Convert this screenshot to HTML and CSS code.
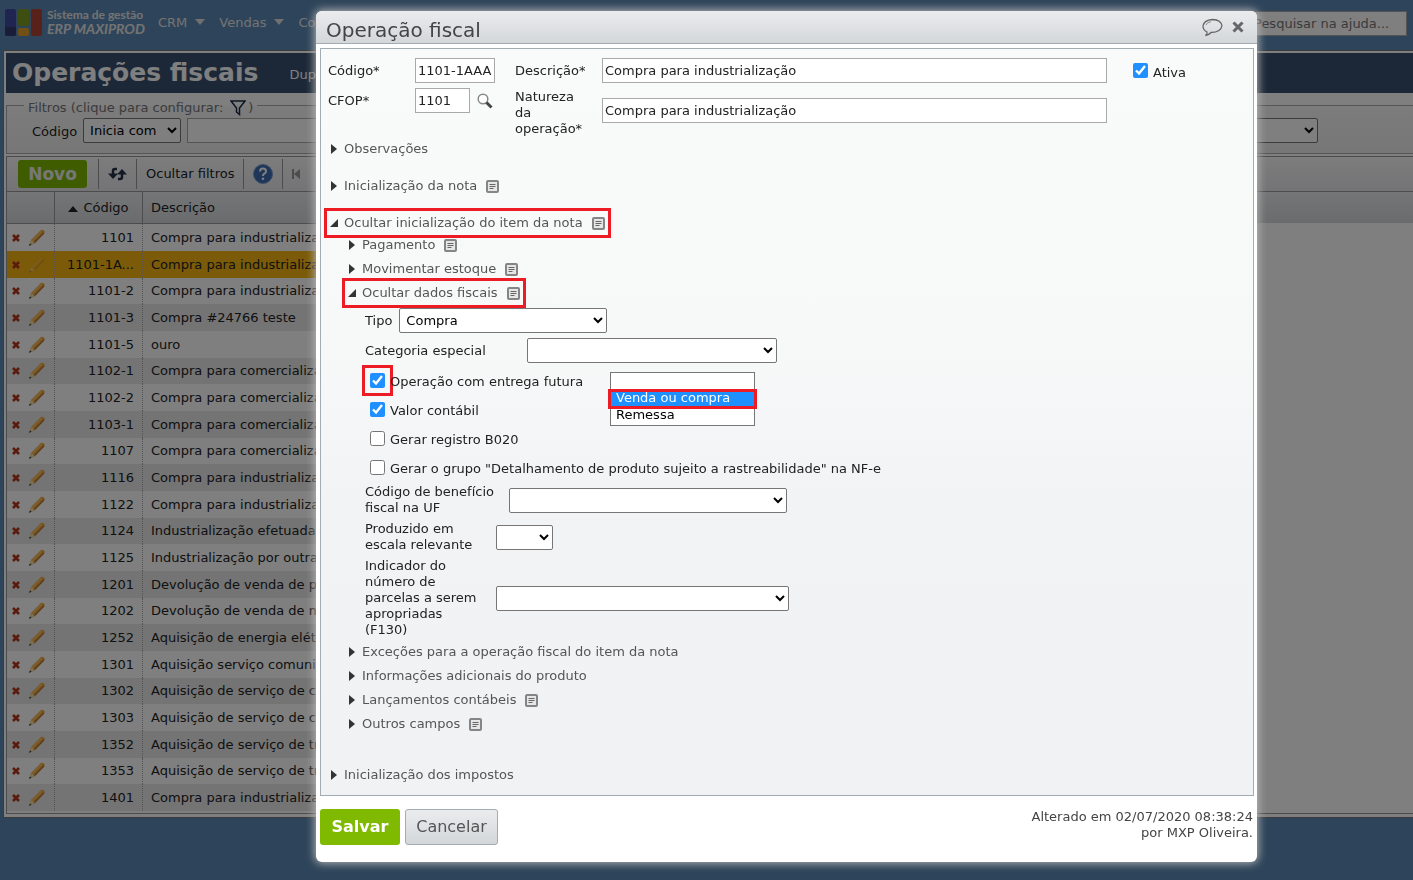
FILE: index.html
```html
<!DOCTYPE html>
<html lang="pt-BR">
<head>
  <meta charset="UTF-8">
  <title>Operações fiscais</title>
  <link rel="stylesheet" href="styles.css">
</head>
<body>
  <svg class="simbolos" aria-hidden="true">
    <symbol id="nota" viewBox="0 0 13 13">
      <rect x="1" y="1" width="11" height="11" rx="1" fill="#e6e6e6" stroke="#858585" stroke-width="2"/>
      <path d="M3.500 4.500h6M3.500 6.500h6M3.500 8.500h4" stroke="#666"/>
    </symbol>
    <symbol id="excluir" viewBox="0 0 10 10">
      <path d="M2 2l6 6M8 2l-6 6" stroke="#b5351c" stroke-width="2.600"/>
    </symbol>
    <symbol id="lapis" viewBox="0 0 18 18">
      <path d="M1 17l2-6L13 1q2-1 4 2L7 14z" fill="#e8a33c"/>
      <path d="M4 12L14 2" stroke="#ffc468" stroke-width="1.500"/>
      <path d="M6 14L16 4" stroke="#b87428" stroke-width="1.200"/>
      <path d="M1 17l2-6 4 3z" fill="#f5dcae"/>
      <path d="M1 17l1-2.500 1.500 1z" fill="#333"/>
    </symbol>
  </svg>

  <header class="topo">
    <svg class="logo" viewBox="0 0 38 28" width="38" height="28">
      <rect x="0" y="0" width="11" height="27" rx="2" fill="#3f48a0"/>
      <rect x="0" y="18" width="11" height="9" rx="2" fill="#343a70"/>
      <rect x="13" y="0" width="11" height="17" rx="2" fill="#7d9c20"/>
      <rect x="13" y="19" width="11" height="8" rx="2" fill="#e3a02c"/>
      <rect x="26" y="0" width="11" height="27" rx="2" fill="#b04436"/>
    </svg>
    <div class="marca">
      <span class="marca-linha">Sistema de gestão</span>
      <span class="marca-nome">ERP MAXIPROD</span>
    </div>
    <nav class="menu">
      <a href="#">CRM<span class="seta"></span></a>
      <a href="#">Vendas<span class="seta"></span></a>
      <a href="#">Compras<span class="seta"></span></a>
    </nav>
    <input class="busca" type="text" placeholder="Pesquisar na ajuda..." aria-label="Pesquisar na ajuda">
  </header>

  <main class="pagina">
    <div class="titulo">
      <h1>Operações fiscais</h1>
      <a href="#">Duplicar</a>
    </div>

    <fieldset class="filtros">
      <legend>Filtros (clique para configurar:
        <svg viewBox="0 0 16 16" width="16" height="16"><path d="M1 1h14L9.500 8v6.500L6.500 12V8z" fill="none" stroke="#1b2c48" stroke-width="1.500"/></svg>)</legend>
      <div class="filtros-linha">
        <label for="f-codigo">Código</label>
        <select id="f-codigo" class="operador"><option>Inicia com</option></select>
        <input type="text" aria-label="Valor do código">
        <select class="filtro-extra" aria-label="Outro filtro"><option></option></select>
      </div>
    </fieldset>

    <div class="grade">
      <div class="ferramentas">
        <button class="novo" type="button">Novo</button>
        <button class="ferramenta" type="button" aria-label="Atualizar">
          <svg viewBox="0 0 19 14" width="19" height="14"><path d="M9 2H7q-2 0-2 2v5M10 12h2q2 0 2-2V5" fill="none" stroke="#22324a" stroke-width="2.500"/><path d="M0 6.500h10L5 12zM9 7.500h10L14 2z" fill="#22324a"/></svg>
        </button>
        <button class="ferramenta" type="button">Ocultar filtros</button>
        <button class="ferramenta" type="button" aria-label="Ajuda">
          <svg viewBox="0 0 20 20" width="20" height="20"><circle cx="10" cy="10" r="9.500" fill="#3a6cb4" stroke="#7f9ccc"/><path d="M7 7.500q0-3 3-3t3 2.700q0 1.600-1.700 2.500-1.300.800-1.300 2.300" fill="none" stroke="#fff" stroke-width="2"/><circle cx="10" cy="14.800" r="1.300" fill="#fff"/></svg>
        </button>
        <button class="ferramenta" type="button" aria-label="Primeira página">
          <svg viewBox="0 0 8 12" width="8" height="12"><path d="M1 1v10" stroke="#999" stroke-width="2"/><path d="M8 1v10L2 6z" fill="#999"/></svg>
        </button>
      </div>
      <div class="cabecalho-fundo">
        <table class="lista">
          <thead>
            <tr><th class="c-acoes"></th><th class="c-codigo"><span class="ordem"></span>Código</th><th class="c-desc">Descrição</th></tr>
          </thead>
          <tbody id="linhas"></tbody>
        </table>
      </div>
    </div>
  </main>

  <div class="sombra"></div>

  <section class="janela" role="dialog" aria-labelledby="janela-titulo">
    <header class="janela-topo">
      <h2 id="janela-titulo">Operação fiscal</h2>
      <button type="button" aria-label="Comentar">
        <svg viewBox="0 0 21 19" width="21" height="19"><path d="M5 14Q1 12 1 8q1-6 9.500-6.500Q19 2 20 7.500q-1 7-11 7Q7 17 3.500 17.500 5.500 16 5 14z" fill="none" stroke="#666" stroke-width="1.300"/><path d="M4 7q1-3 5-3.300" fill="none" stroke="#888"/></svg>
      </button>
      <button type="button" aria-label="Fechar">
        <svg viewBox="0 0 12 12" width="12" height="12"><path d="M1.500 1.500l9 9M10.500 1.500l-9 9" stroke="#666" stroke-width="3"/></svg>
      </button>
    </header>

    <form class="conteudo">
      <div class="dados">
        <label for="codigo">Código*</label>
        <div><input id="codigo" class="i-codigo" type="text" value="1101-1AAA"></div>
        <label for="descricao">Descrição*</label>
        <input id="descricao" type="text" value="Compra para industrialização">
        <div class="ativa"><input id="ativa" type="checkbox" checked><label for="ativa">Ativa</label></div>

        <label for="cfop">CFOP*</label>
        <div class="cfop">
          <input id="cfop" class="i-cfop" type="text" value="1101">
          <button type="button" aria-label="Procurar CFOP">
            <svg viewBox="0 0 16 16" width="16" height="16"><circle cx="6" cy="6" r="4.800" fill="#fff" stroke="#888" stroke-width="1.500"/><path d="M9.500 9.500l5 5" stroke="#444" stroke-width="3"/></svg>
          </button>
        </div>
        <label class="natureza" for="natureza">Natureza da operação*</label>
        <input id="natureza" class="i-natureza" type="text" value="Compra para industrialização">
      </div>

      <div class="secoes">
        <a class="secao" href="#"><i class="fechado"></i>Observações</a>
        <a class="secao" href="#"><i class="fechado"></i>Inicialização da nota<svg class="nota"><use href="#nota"/></svg></a>
        <a class="secao marcado" href="#"><i class="aberto"></i>Ocultar inicialização do item da nota<svg class="nota"><use href="#nota"/></svg></a>
      </div>

      <div class="subsecoes">
        <a class="secao" href="#"><i class="fechado"></i>Pagamento<svg class="nota"><use href="#nota"/></svg></a>
        <a class="secao" href="#"><i class="fechado"></i>Movimentar estoque<svg class="nota"><use href="#nota"/></svg></a>
        <a class="secao marcado" href="#"><i class="aberto"></i>Ocultar dados fiscais<svg class="nota"><use href="#nota"/></svg></a>

        <div class="campos">
          <div class="campo">
            <label for="tipo">Tipo</label>
            <select id="tipo" class="s-tipo"><option>Compra</option></select>
          </div>
          <div class="campo">
            <label for="categoria" class="l-categoria">Categoria especial</label>
            <select id="categoria" class="s-categoria"><option></option></select>
          </div>
          <div class="campo check">
            <span class="caixa"><input id="futura" type="checkbox" checked></span>
            <label for="futura">Operação com entrega futura</label>
            <div class="opcoes">
              <select size="3" aria-label="Tipo de entrega futura">
                <option></option>
                <option class="ativo">Venda ou compra</option>
                <option>Remessa</option>
              </select>
              <span class="moldura"></span>
            </div>
          </div>
          <div class="campo check">
            <input id="contabil" type="checkbox" checked>
            <label for="contabil">Valor contábil</label>
          </div>
          <div class="campo check">
            <input id="b020" type="checkbox">
            <label for="b020">Gerar registro B020</label>
          </div>
          <div class="campo check">
            <input id="rastro" type="checkbox">
            <label for="rastro">Gerar o grupo "Detalhamento de produto sujeito a rastreabilidade" na NF-e</label>
          </div>
          <div class="campo">
            <label for="beneficio" class="l-beneficio">Código de benefício fiscal na UF</label>
            <select id="beneficio" class="s-beneficio"><option></option></select>
          </div>
          <div class="campo">
            <label for="escala" class="l-estreito">Produzido em escala relevante</label>
            <select id="escala" class="s-escala"><option></option></select>
          </div>
          <div class="campo">
            <label for="parcelas" class="l-estreito">Indicador do número de parcelas a serem apropriadas (F130)</label>
            <select id="parcelas" class="s-parcelas"><option></option></select>
          </div>
        </div>

        <a class="secao" href="#"><i class="fechado"></i>Exceções para a operação fiscal do item da nota</a>
        <a class="secao" href="#"><i class="fechado"></i>Informações adicionais do produto</a>
        <a class="secao" href="#"><i class="fechado"></i>Lançamentos contábeis<svg class="nota"><use href="#nota"/></svg></a>
        <a class="secao" href="#"><i class="fechado"></i>Outros campos<svg class="nota"><use href="#nota"/></svg></a>
      </div>

      <a class="secao impostos" href="#"><i class="fechado"></i>Inicialização dos impostos</a>
    </form>

    <footer class="rodape">
      <button class="salvar" type="button">Salvar</button>
      <button class="cancelar" type="button">Cancelar</button>
      <p>Alterado em 02/07/2020 08:38:24<br>por MXP Oliveira.</p>
    </footer>
  </section>

  <script src="script.js"></script>
</body>
</html>
```
FILE: styles.css
```css
* {
  box-sizing: border-box;
}

body {
  margin: 0;
  height: 100vh;
  overflow: hidden;
  background: #5c89b5;
  font-family: 'DejaVu Sans', Verdana, sans-serif;
  font-size: 13px;
  line-height: 16px;
  color: #222;
}

input, select, button {
  font: inherit;
  color: inherit;
}

button {
  padding: 0;
  border: 0;
  background: none;
}

a {
  color: inherit;
  text-decoration: none;
}

svg {
  flex: none;
}

input[type="text"], select {
  height: 25px;
  background: #fff;
}

input[type="text"] {
  border: 1px solid #a9a9a9;
  padding: 0 2px;
}

select {
  border: 1px solid #767676;
  border-radius: 2px;
  padding: 0 2px;
  color: #000;
}

input[type="checkbox"] {
  width: 15px;
  height: 15px;
  margin: 0;
  accent-color: #1e90ff;
}

.simbolos {
  position: absolute;
  width: 0;
  height: 0;
}

/* topo */
.topo {
  display: flex;
  align-items: center;
  height: 50px;
  padding: 0 6px 4px 5px;
  color: #e6e6e6;
}

.marca {
  display: flex;
  flex-direction: column;
  width: 111px;
  margin-left: 4px;
  font-family: Lato, sans-serif;
  font-weight: bold;
  white-space: nowrap;
}

.marca-linha {
  font-size: 12px;
  line-height: 12px;
}

.marca-nome {
  font-size: 14px;
  font-style: italic;
}

.menu {
  display: flex;
  gap: 14px;
}

.menu a {
  display: flex;
  gap: 8px;
}

.seta {
  margin-top: 4px;
  border: 5px solid transparent;
  border-top: 6px solid #e0e0e0;
  height: 0;
}

.busca {
  width: 156px;
  margin-left: auto;
}

/* pagina de fundo */
.pagina {
  margin-left: 3px;
  border: 1px solid #777;
  border-right: 0;
  padding: 2px 0 3px 2px;
  background: #fff;
}

.titulo {
  display: flex;
  align-items: center;
  gap: 31px;
  height: 40px;
  padding-left: 6px;
  background: #39516f;
  color: #fff;
}

.titulo h1 {
  margin: 0;
  font-size: 25px;
  line-height: 32px;
}

.titulo a {
  padding-top: 3px;
}

.filtros {
  margin: 0;
  border: 1px solid #aaa;
  border-right: 0;
  padding: 1px 95px 10px 25px;
  background: linear-gradient(#f8f8fa, #eee);
}

.filtros legend {
  display: flex;
  align-items: center;
  gap: 7px;
  height: 24px;
  margin-left: -8px;
  padding: 5px 4px 0;
  color: #777;
}

.filtros legend svg {
  margin-right: -5px;
}

.filtros-linha {
  display: flex;
  align-items: center;
  gap: 6px;
}

.filtros-linha label {
  padding-top: 2px;
}

.operador {
  width: 98px;
}

.filtros-linha input {
  width: 400px;
}

.filtro-extra {
  width: 200px;
  margin-left: auto;
}

.grade {
  margin-top: 2px;
  border: 1px solid #999;
  border-right: 0;
}

.ferramentas {
  display: flex;
  align-items: center;
  height: 34px;
  padding-left: 11px;
  background: linear-gradient(#fafafc, #e8e8ec);
}

.novo {
  width: 69px;
  height: 28px;
  margin-right: 11px;
  border-radius: 3px;
  background: #7fba00;
  color: #eee;
  font-size: 17px;
  font-weight: bold;
}

.ferramenta {
  display: flex;
  align-items: center;
  height: 30px;
  padding: 0 9px;
  border-left: 1px solid #999;
}

.cabecalho-fundo {
  border-top: 1px solid #999;
  background: linear-gradient(#eaecef, #d3d7db) top / 100% 31px no-repeat;
}

.lista {
  width: 800px;
  table-layout: fixed;
  border-collapse: separate;
  border-spacing: 0;
  margin-bottom: 2px;
}

.lista th {
  height: 32px;
  border-right: 1px solid #999;
  border-bottom: 1px solid #999;
  font-weight: normal;
}

.lista th, .lista td {
  padding: 0 8px;
}

.c-acoes {
  width: 48px;
}

.c-codigo {
  width: 88px;
}

.c-desc {
  text-align: left;
}

.ordem {
  display: inline-block;
  margin-right: 5px;
  border: 5px solid transparent;
  border-top: 0;
  border-bottom: 6px solid #222;
}

.lista td {
  height: 27px;
  border-right: 1px dotted #aaa;
}

.lista tr:nth-child(3n) td {
  height: 26px;
}

.lista tbody tr:nth-child(even) {
  background: #e8e8e8;
}

.lista tbody tr.selecionada {
  background: #f7b613;
}

.lista td:nth-child(2) {
  text-align: right;
}

.lista .acoes {
  padding: 0 0 0 4px;
}

.acoes div {
  display: flex;
  align-items: center;
  gap: 7px;
}

.acoes button {
  display: flex;
}

.selecionada .lapis {
  opacity: 0.4;
}

.sombra {
  position: fixed;
  inset: 0;
  background: rgba(0, 0, 0, 0.5);
}

/* janela */
.janela {
  position: absolute;
  top: 11px;
  left: 316px;
  right: 156px;
  border-radius: 6px;
  background: #fff;
  box-shadow: 0 0 10px 1px #bbb;
}

.janela-topo {
  display: flex;
  align-items: center;
  gap: 9px;
  height: 33px;
  padding: 0 13px 0 10px;
  border-bottom: 1px solid #a3abb5;
  border-radius: 6px 6px 0 0;
  background: linear-gradient(#ebecee, #d3d7da);
}

.janela-topo h2 {
  flex: 1;
  margin: 0;
  padding-top: 5px;
  font-size: 20px;
  line-height: 26px;
  font-weight: normal;
  color: #444;
}

.janela-topo button, .cfop button {
  display: flex;
}

.conteudo {
  margin: 4px 3px 0 4px;
  border: 1px solid #a3abb5;
  padding: 9px 7px 8px;
  background: linear-gradient(#f9fbfa, #f7f9f9 40%, #f1f3f5 60%, #f1f2f4);
}

.dados {
  display: grid;
  grid-template-columns: 87px 100px 87px 1fr 139px;
  row-gap: 5px;
}

.dados label {
  padding-top: 5px;
}

.dados .natureza {
  width: 75px;
  padding-top: 1px;
}

.i-codigo {
  width: 80px;
}

.i-cfop {
  width: 55px;
}

.i-natureza {
  margin-top: 10px;
}

.cfop {
  display: flex;
  align-items: center;
  align-self: start;
  gap: 7px;
}

.ativa {
  display: flex;
  align-items: center;
  gap: 5px;
  margin-left: 26px;
}

.secoes {
  display: flex;
  flex-direction: column;
  align-items: flex-start;
  gap: 13px;
}

.secao {
  display: flex;
  align-items: center;
  height: 24px;
  padding: 0 3px;
  color: #555;
}

.secao i {
  width: 13px;
}

.fechado::before, .aberto::before {
  content: '';
  display: block;
  width: 0;
  border: 5px solid transparent;
}

.fechado::before {
  border-left: 6px solid #333;
  border-right: 0;
}

.aberto::before {
  border-width: 0 0 8px 8px;
  border-bottom-color: #333;
}

.secao .aberto {
  margin-left: -1px;
  width: 14px;
}

.nota {
  width: 13px;
  height: 13px;
  margin-left: 9px;
}

.marcado {
  margin-left: -1px;
  padding-left: 4px;
  outline: 3px solid #ed1c24;
}

.subsecoes {
  display: flex;
  flex-direction: column;
  align-items: flex-start;
  margin-top: -2px;
  padding-left: 18px;
}

.campos {
  display: flex;
  flex-direction: column;
  gap: 5px;
  padding: 3px 0 2px 19px;
}

.campo {
  display: flex;
  align-items: center;
}

.s-tipo {
  width: 208px;
  margin-left: 7px;
}

.l-categoria {
  width: 162px;
}

.s-categoria {
  width: 250px;
}

.check {
  position: relative;
  height: 24px;
  padding-left: 5px;
  gap: 5px;
}

.check label {
  padding-top: 4px;
}

.caixa {
  display: flex;
  outline: 3px solid #ed1c24;
  outline-offset: 5px;
}

.opcoes {
  position: absolute;
  top: 4px;
  left: 245px;
}

.opcoes select {
  display: block;
  width: 145px;
  height: 54px;
  padding: 0;
  overflow: hidden;
  border-radius: 0;
}

.opcoes option {
  height: 17px;
  min-height: 17px;
  padding: 0 5px;
  line-height: 17px;
}

.opcoes .ativo {
  background: #1e90ff;
  color: #fff;
}

.moldura {
  position: absolute;
  top: 17px;
  left: -2px;
  right: -2px;
  height: 20px;
  border: 3px solid #ed1c24;
}

.l-beneficio {
  width: 144px;
}

.s-beneficio {
  width: 278px;
}

.l-estreito {
  width: 131px;
  padding-right: 10px;
}

.s-escala {
  width: 57px;
}

.s-parcelas {
  width: 293px;
}

.impostos {
  margin-top: 27px;
}

.rodape {
  display: flex;
  gap: 5px;
  padding: 13px 4px 17px;
}

.rodape button {
  height: 36px;
  border-radius: 3px;
  font-size: 16px;
}

.rodape .salvar {
  width: 80px;
  background: #7fba00;
  color: #fff;
  font-weight: bold;
}

.rodape .cancelar {
  width: 93px;
  border: 1px solid #a3abb5;
  background: linear-gradient(#ebecee, #d3d7da);
  color: #555;
}

.rodape p {
  margin: 0 0 0 auto;
  text-align: right;
  color: #444;
}
```
FILE: script.js
```js
const operacoes = [
  ["1101", "Compra para industrialização"],
  ["1101-1A...", "Compra para industrialização"],
  ["1101-2", "Compra para industrialização"],
  ["1101-3", "Compra #24766 teste"],
  ["1101-5", "ouro"],
  ["1102-1", "Compra para comercialização"],
  ["1102-2", "Compra para comercialização"],
  ["1103-1", "Compra para comercialização"],
  ["1107", "Compra para comercialização"],
  ["1116", "Compra para industrialização"],
  ["1122", "Compra para industrialização"],
  ["1124", "Industrialização efetuada"],
  ["1125", "Industrialização por outra"],
  ["1201", "Devolução de venda de produção"],
  ["1202", "Devolução de venda de mercadoria"],
  ["1252", "Aquisição de energia elétrica"],
  ["1301", "Aquisição serviço comunicação"],
  ["1302", "Aquisição de serviço de comunicação"],
  ["1303", "Aquisição de serviço de comunicação"],
  ["1352", "Aquisição de serviço de transporte"],
  ["1353", "Aquisição de serviço de transporte"],
  ["1401", "Compra para industrialização"]
];

document.getElementById("linhas").innerHTML = operacoes.map(([codigo, descricao], i) => `
  <tr${i === 1 ? ' class="selecionada"' : ''}>
    <td class="acoes"><div>
      <button type="button" aria-label="Excluir ${codigo}"><svg width="10" height="10"><use href="#excluir"/></svg></button>
      <button class="lapis" type="button" aria-label="Editar ${codigo}"><svg width="18" height="18"><use href="#lapis"/></svg></button>
    </div></td>
    <td>${codigo}</td>
    <td>${descricao}</td>
  </tr>`).join("");
```
